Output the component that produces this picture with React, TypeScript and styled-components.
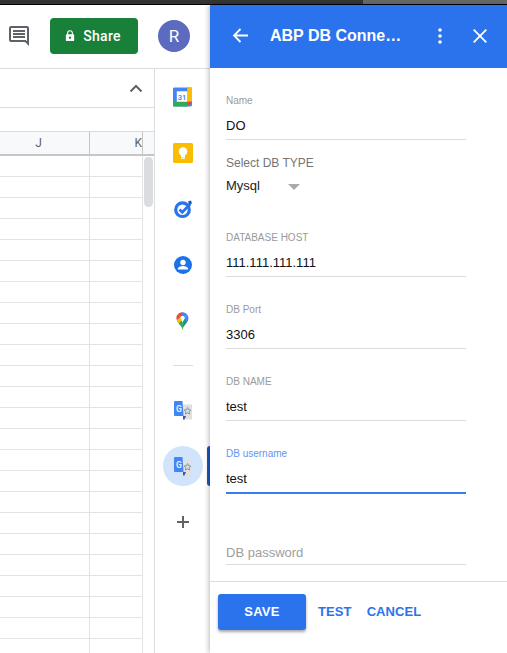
import styled, { createGlobalStyle } from 'styled-components';

const GlobalStyle = createGlobalStyle`
html, body {
    margin: 0;
    padding: 0;
    background: #fff;
    overflow: hidden;
}
* { box-sizing: border-box; }
`;

const Page = styled.div`
width: 507px;
height: 653px;
display: flex;
flex-direction: column;
overflow: hidden;
font-family: "Liberation Sans", Arial, sans-serif;
`;

const TopStrip = styled.div`
height: 5px;
flex: none;
display: flex;
background: #333;
border-bottom: 1px solid #000;
`;

const StripLight = styled.div`
flex: 1;
margin-left: 363px;
background: #666;
`;

const Body = styled.div`
flex: 1;
display: flex;
min-height: 0;
`;

const LeftArea = styled.div`
width: 210px;
flex: none;
display: flex;
flex-direction: column;
`;

const DocHeader = styled.header`
height: 64px;
flex: none;
display: flex;
align-items: center;
padding: 0 0 2px 7px;
border-bottom: 1px solid #dadce0;
`;

const ShareButton = styled.div`
width: 88px;
height: 36px;
margin-left: 19px;
padding-right: 2px;
background: #188038;
border-radius: 4px;
display: flex;
align-items: center;
justify-content: center;
gap: 8px;
color: #fff;
font: 500 14px Roboto, sans-serif;
letter-spacing: 0.3px;
`;

const Avatar = styled.div`
width: 32px;
height: 32px;
margin-left: 20px;
border-radius: 50%;
background: #5c6bc0;
color: #fff;
display: flex;
align-items: center;
justify-content: center;
font: 400 17px Roboto, sans-serif;
`;

const Workspace = styled.div`
flex: 1;
display: flex;
min-height: 0;
`;

const SheetColumn = styled.div`
width: 155px;
flex: none;
position: relative;
overflow: hidden;
border-right: 1px solid #dadce0;
`;

const MenuRow = styled.div`
height: 39px;
display: flex;
align-items: center;
justify-content: flex-end;
padding-right: 11px;
border-bottom: 1px solid #dadce0;
`;

const FormulaRow = styled.div`
height: 23px;
`;

const ColumnHeads = styled.div`
height: 25px;
display: flex;
background: #f8f9fa;
border-top: 1px solid #dadce0;
border-bottom: 2px solid #c4c7c5;
color: #5f6368;
font: 400 12px Roboto, sans-serif;
`;

const HeadCell = styled.div<{ $wide?: boolean }>`
width: ${p => (p.$wide ? '90px' : '53px')};
display: flex;
align-items: center;
overflow: hidden;
justify-content: ${p => (p.$wide ? 'center' : 'flex-end')};
border-right: 1px solid #c4c7c5;
padding-right: ${p => (p.$wide ? '12px' : '0')};
`;

const GridRow = styled.div`
width: 143px;
height: 21px;
display: flex;
border-bottom: 1px solid #e2e3e3;
`;

const GridCell = styled.div<{ $wide?: boolean }>`
width: ${p => (p.$wide ? '90px' : '53px')};
border-right: 1px solid #e2e3e3;
`;

const ScrollThumb = styled.div`
position: absolute;
left: 144px;
top: 88px;
width: 9px;
height: 50px;
border-radius: 5px;
background: #dadce0;
`;

const Rail = styled.nav`
width: 55px;
flex: none;
position: relative;
display: flex;
flex-direction: column;
align-items: center;
`;

const RailSlot = styled.div`
height: 56px;
flex: none;
display: flex;
align-items: center;
justify-content: center;
width: 100%;
`;

const RailRule = styled.div`
width: 20px;
height: 1px;
margin: 16px 0;
background: #dadce0;
`;

const ActiveDisc = styled.div`
width: 40px;
height: 40px;
border-radius: 50%;
background: #d2e3fc;
display: flex;
align-items: center;
justify-content: center;
`;

const ActiveMark = styled.div`
position: absolute;
right: 0;
top: 377px;
width: 3px;
height: 40px;
border-radius: 3px 0 0 3px;
background: #1a56c4;
`;

const Panel = styled.aside`
flex: 1;
min-width: 0;
display: flex;
flex-direction: column;
background: #fff;
box-shadow: -2px 0 4px rgba(0, 0, 0, 0.2);
position: relative;
`;

const PanelBar = styled.div`
height: 63px;
flex: none;
display: flex;
align-items: center;
background: #2a73ed;
color: #fff;
padding: 0 20px 2px 22px;
`;

const PanelTitle = styled.div`
margin-left: 22px;
font: 700 16px "Liberation Sans", Arial, sans-serif;
white-space: nowrap;
`;

const BarIcons = styled.div`
margin-left: auto;
display: flex;
align-items: center;
gap: 31px;
`;

const Form = styled.div`
flex: 1;
padding: 0 41px 0 16px;
display: flex;
flex-direction: column;
`;

const Field = styled.div<{ $top: number }>`
margin-top: ${p => p.$top}px;
`;

const FloatLabel = styled.div<{ $active?: boolean }>`
height: 12px;
font-size: 10px;
line-height: 12px;
color: ${p => (p.$active ? '#5f95f3' : '#9a9a9a')};
`;

const Value = styled.div<{ $active?: boolean; $muted?: boolean }>`
height: ${p => (p.$active ? '28px' : '27px')};
margin-top: 6px;
font-size: 13px;
line-height: 20px;
padding-top: ${p => (p.$muted ? '5px' : '3px')};
color: ${p => (p.$muted ? '#9e9e9e' : '#111')};
border-bottom: ${p => (p.$active ? '2px solid #3a7df0' : '1px solid #dcdcdc')};
`;

const SelectLabel = styled.div`
font-size: 12px;
line-height: 16px;
color: #767676;
`;

const SelectRow = styled.div`
display: flex;
align-items: center;
height: 20px;
margin-top: 4px;
font-size: 13px;
color: #222;
`;

const Caret = styled.div`
width: 0;
height: 0;
margin: 3px 0 0 28px;
border-left: 6px solid transparent;
border-right: 6px solid transparent;
border-top: 6px solid #aaa;
`;

const Footer = styled.div`
height: 72px;
flex: none;
display: flex;
align-items: flex-start;
padding: 12px 0 0 8px;
border-top: 1px solid #dcdcdc;
`;

const SaveButton = styled.div`
width: 88px;
height: 36px;
border-radius: 3px;
background: #2a73ed;
color: #fff;
font-size: 13px;
font-weight: 700;
letter-spacing: 0.3px;
padding-bottom: 1px;
display: flex;
align-items: center;
justify-content: center;
box-shadow: 0 2px 3px rgba(0, 0, 0, 0.35);
`;

const TextButton = styled.div<{ $left: number }>`
height: 36px;
margin-left: ${p => p.$left}px;
padding-bottom: 1px;
display: flex;
align-items: center;
color: #2a73ed;
font-size: 13px;
font-weight: 700;
letter-spacing: 0.1px;
`;

function CommentIcon() {
    return (
        <svg width="24" height="24" viewBox="0 0 24 24" fill="#5f6368">
            <path d="M22 4c0-1.100-.9-2-2-2H4c-1.100 0-2 .9-2 2v12c0 1.100.9 2 2 2h14l4 4V4zm-2 13.200L18.800 16H4V4h16v13.200zM6 12h12v2H6zm0-3h12v2H6zm0-3h12v2H6z" />
        </svg>
    );
}

function LockIcon() {
    return (
        <svg width="10" height="12" viewBox="0 0 12 14" fill="#fff">
            <path d="M10 5H9.500V3.500a3.500 3.500 0 0 0-7 0V5H2a1 1 0 0 0-1 1v6a1 1 0 0 0 1 1h8a1 1 0 0 0 1-1V6a1 1 0 0 0-1-1zM6 10.500A1.400 1.400 0 1 1 6 7.700a1.400 1.400 0 0 1 0 2.800zM8.200 5H3.800V3.500a2.200 2.200 0 0 1 4.400 0V5z" />
        </svg>
    );
}

function ChevronUp() {
    return (
        <svg width="14" height="9" viewBox="0 0 14 9" fill="none" stroke="#5f6368" strokeWidth="2">
            <path d="M1.500 7.500 7 2l5.500 5.500" />
        </svg>
    );
}

function CalendarIcon() {
    return (
        <svg width="19" height="20" viewBox="0 0 20 20">
            <rect width="20" height="20" rx="1.500" fill="#4285f4" />
            <rect x="15" y="0" width="5" height="15" fill="#fbbc04" />
            <rect x="0" y="15" width="15" height="5" fill="#34a853" />
            <path d="M15 15h5l-5 5z" fill="#ea4335" />
            <rect x="4" y="4" width="11" height="11" fill="#fff" />
            <text x="9.500" y="12.800" textAnchor="middle" fontSize="8" fontWeight="500" fontFamily="Roboto, sans-serif" fill="#3b78e7">31</text>
        </svg>
    );
}

function KeepIcon() {
    return (
        <svg width="20" height="20" viewBox="0 0 20 20">
            <rect width="20" height="20" rx="1.500" fill="#fbbc04" />
            <circle cx="10" cy="8.500" r="4.300" fill="#fff" />
            <rect x="8" y="11" width="4" height="3" fill="#fff" />
            <rect x="8" y="14.500" width="4" height="1.300" fill="#fff" />
        </svg>
    );
}

function TasksIcon() {
    return (
        <svg width="20" height="20" viewBox="0 0 20 20" fill="none">
            <circle cx="9.500" cy="10.700" r="6.800" stroke="#2a73ed" strokeWidth="3.200" />
            <path d="M6.500 10.500l2.800 2.800 8-8.300" stroke="#2a73ed" strokeWidth="2.800" />
            <path d="M15 2.500l3-1 1 3-3 1z" fill="#1a56c4" />
        </svg>
    );
}

function ContactsIcon() {
    return (
        <svg width="20" height="20" viewBox="0 0 20 20">
            <circle cx="10" cy="10" r="9" fill="#1a73e8" />
            <circle cx="10" cy="7.500" r="2.700" fill="#fff" />
            <path d="M4.800 14c0-2 3.200-3 5.200-3s5.200 1 5.200 3v.600H4.800z" fill="#fff" />
        </svg>
    );
}

function MapsIcon() {
    return (
        <svg width="13" height="18" viewBox="0 0 14 20">
            <path d="M7 19.500C6.400 16 1.700 12.500.700 9L4 6.500l3 5 .500 8z" fill="#34a853" />
            <path d="M7 19.500c.6-3.500 5.300-7 6.200-10.500L10 6.500l-3 5z" fill="#1a9a6c" />
            <path d="M2 2.300A6.500 6.500 0 0 0 .700 9L4.500 6z" fill="#ea4335" />
            <path d="M2 2.300A6.500 6.500 0 0 1 7 .200L10 2 4.500 6z" fill="#ea4335" />
            <path d="M7 .2a6.500 6.500 0 0 1 5.600 3.200L9 6 5 2z" fill="#4285f4" />
            <path d="M12.600 3.400A6.500 6.500 0 0 1 13.200 9c-.5 1.200-1.200 2.200-2 3.200L9 6z" fill="#4285f4" />
            <path d="M.7 9c.5 1.300 1.300 2.400 2.200 3.500L9.500 6 4.500 6z" fill="#fbbc04" />
            <circle cx="7" cy="6.500" r="2.300" fill="#fff" />
        </svg>
    );
}

function TranslateIcon() {
    return (
        <svg width="18" height="19" viewBox="0 0 18 19">
            <rect x="9" y="3.500" width="9" height="15" fill="#e0e0e0" />
            <path d="M13.500 6.500l1 2.300 2.400.2-1.800 1.600.5 2.400-2.100-1.200-2.100 1.200.5-2.400-1.800-1.600 2.400-.2z" fill="none" stroke="#78909c" strokeWidth="0.900" />
            <path d="M0 1a1 1 0 0 1 1-1h7.500l1 15H1a1 1 0 0 1-1-1z" fill="#4285f4" />
            <path d="M9 15h3l-1.500 3.500H9z" fill="#3f51b5" />
            <text x="4.800" y="10.500" textAnchor="middle" fontSize="8.500" fontWeight="700" fontFamily="Roboto, sans-serif" fill="#e3eefe">G</text>
        </svg>
    );
}

function PlusIcon() {
    return (
        <svg width="14" height="14" viewBox="0 0 14 14" fill="#5f6368">
            <path d="M6 1h2v5h5v2H8v5H6V8H1V6h5z" />
        </svg>
    );
}

function BackIcon() {
    return (
        <svg width="16" height="15" viewBox="0 0 16 15" fill="none" stroke="#fff" strokeWidth="1.800">
            <path d="M16 7.500H2M8.500 1 2 7.500 8.500 14" />
        </svg>
    );
}

function DotsIcon() {
    return (
        <svg width="4" height="16" viewBox="0 0 4 16" fill="#fff">
            <circle cx="2" cy="2" r="1.800" />
            <circle cx="2" cy="8" r="1.800" />
            <circle cx="2" cy="14" r="1.800" />
        </svg>
    );
}

function CloseIcon() {
    return (
        <svg width="14" height="14" viewBox="0 0 14 14" fill="none" stroke="#fff" strokeWidth="1.800">
            <path d="M.7.700l12.600 12.600M13.300.700.700 13.300" />
        </svg>
    );
}

const gridRows = Array.from({ length: 24 }, (_, i) => i);

export default function App() {
    return (
        <Page>
            <GlobalStyle />
            <TopStrip>
                <StripLight />
            </TopStrip>
            <Body>
                <LeftArea>
                    <DocHeader>
                        <CommentIcon />
                        <ShareButton>
                            <LockIcon />
                            <span>Share</span>
                        </ShareButton>
                        <Avatar>R</Avatar>
                    </DocHeader>
                    <Workspace>
                        <SheetColumn>
                            <MenuRow>
                                <ChevronUp />
                            </MenuRow>
                            <FormulaRow />
                            <ColumnHeads>
                                <HeadCell $wide>J</HeadCell>
                                <HeadCell>K</HeadCell>
                            </ColumnHeads>
                            {gridRows.map(i => (
                                <GridRow key={i}>
                                    <GridCell $wide />
                                    <GridCell />
                                </GridRow>
                            ))}
                            <ScrollThumb />
                        </SheetColumn>
                        <Rail>
                            <RailSlot><CalendarIcon /></RailSlot>
                            <RailSlot><KeepIcon /></RailSlot>
                            <RailSlot><TasksIcon /></RailSlot>
                            <RailSlot><ContactsIcon /></RailSlot>
                            <RailSlot><MapsIcon /></RailSlot>
                            <RailRule />
                            <RailSlot><TranslateIcon /></RailSlot>
                            <RailSlot>
                                <ActiveDisc><TranslateIcon /></ActiveDisc>
                            </RailSlot>
                            <RailSlot><PlusIcon /></RailSlot>
                            <ActiveMark />
                        </Rail>
                    </Workspace>
                </LeftArea>
                <Panel>
                    <PanelBar>
                        <BackIcon />
                        <PanelTitle>ABP DB Conne…</PanelTitle>
                        <BarIcons>
                            <DotsIcon />
                            <CloseIcon />
                        </BarIcons>
                    </PanelBar>
                    <Form>
                        <Field $top={27}>
                            <FloatLabel>Name</FloatLabel>
                            <Value>DO</Value>
                        </Field>
                        <Field $top={15}>
                            <SelectLabel>Select DB TYPE</SelectLabel>
                            <SelectRow>
                                Mysql
                                <Caret />
                            </SelectRow>
                        </Field>
                        <Field $top={37}>
                            <FloatLabel>DATABASE HOST</FloatLabel>
                            <Value>111.111.111.111</Value>
                        </Field>
                        <Field $top={27}>
                            <FloatLabel>DB Port</FloatLabel>
                            <Value>3306</Value>
                        </Field>
                        <Field $top={27}>
                            <FloatLabel>DB NAME</FloatLabel>
                            <Value>test</Value>
                        </Field>
                        <Field $top={27}>
                            <FloatLabel $active>DB username</FloatLabel>
                            <Value $active>test</Value>
                        </Field>
                        <Field $top={38}>
                            <Value $muted>DB password</Value>
                        </Field>
                    </Form>
                    <Footer>
                        <SaveButton>SAVE</SaveButton>
                        <TextButton $left={12}>TEST</TextButton>
                        <TextButton $left={15}>CANCEL</TextButton>
                    </Footer>
                </Panel>
            </Body>
        </Page>
    );
}
